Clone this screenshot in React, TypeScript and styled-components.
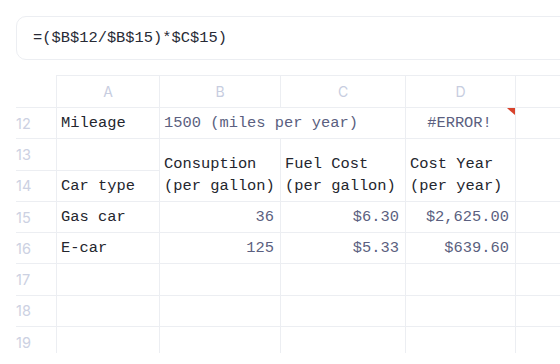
import { Fragment } from "react";
import { createGlobalStyle, styled } from "styled-components";

const GlobalStyle = createGlobalStyle`
    html, body {
        margin: 0;
        padding: 0;
        background: #ffffff;
        overflow: hidden;
    }
`;

const LINE = "#eceef2";
const MONO = "'Liberation Mono', 'DejaVu Sans Mono', monospace";
const SANS = "Inter, 'Noto Sans', sans-serif";

const StyledPage = styled.main`
    width: 560px;
    height: 364px;
    padding: 16px 0 0 16px;
    box-sizing: border-box;
    overflow: hidden;
`;

const FormulaBar = styled.div`
    width: 640px;
    height: 44px;
    box-sizing: border-box;
    display: flex;
    align-items: center;
    padding: 0 16px;
    border: 1px solid ${LINE};
    border-radius: 10px;
    font-family: ${MONO};
    font-size: 15.4px;
    color: #272a35;
    white-space: pre;
`;

const Sheet = styled.div`
    margin-top: 15px;
    width: 640px;
    height: 278px;
    overflow: hidden;
    display: grid;
    grid-template-columns: 41px 103px 121px 125px 110px 140px;
    grid-template-rows: 33px repeat(8, 31.3px);
`;

const Corner = styled.div`
    border-right: 1px solid ${LINE};
    border-bottom: 1px solid ${LINE};
`;

const ColHeader = styled.div`
    display: flex;
    align-items: center;
    justify-content: center;
    border-top: 1px solid ${LINE};
    border-right: 1px solid ${LINE};
    border-bottom: 1px solid ${LINE};
    font-family: ${SANS};
    font-size: 14px;
    color: #c7cde0;
`;

const RowHeader = styled.div`
    display: flex;
    align-items: center;
    border-right: 1px solid ${LINE};
    border-bottom: 1px solid ${LINE};
    font-family: ${SANS};
    font-size: 14.5px;
    color: #ccd1e2;
`;

type Align = "left" | "right" | "center";

const justify = { left: "flex-start", right: "flex-end", center: "center" };

const Cell = styled.div<{ $align?: Align; $value?: boolean; $rows?: number; $cols?: number; $bottom?: boolean }>`
    position: relative;
    display: flex;
    flex-direction: column;
    justify-content: ${(p) => (p.$bottom ? "flex-end" : "center")};
    align-items: ${(p) => justify[p.$align ?? "left"]};
    padding: ${(p) => (p.$bottom ? "0 6px 4px 4px" : "0 6px 0 4px")};
    grid-row: span ${(p) => p.$rows ?? 1};
    grid-column: span ${(p) => p.$cols ?? 1};
    border-right: 1px solid ${LINE};
    border-bottom: 1px solid ${LINE};
    font-family: ${MONO};
    font-size: 15.4px;
    line-height: 22px;
    white-space: pre;
    color: ${(p) => (p.$value ? "#5b5f80" : "#24262e")};
`;

const ErrorFlag = styled.span`
    position: absolute;
    top: 0;
    right: 0;
    width: 0;
    height: 0;
    border-top: 7px solid #d8432c;
    border-left: 8px solid transparent;
`;

const columns = ["A", "B", "C", "D", ""];

const rows = [
    { n: 15, name: "Gas car", use: "36", fuel: "$6.30", cost: "$2,625.00" },
    { n: 16, name: "E-car", use: "125", fuel: "$5.33", cost: "$639.60" },
];

const App = () => {
    return (
        <StyledPage>
            <GlobalStyle />
            <FormulaBar>=($B$12/$B$15)*$C$15)</FormulaBar>
            <Sheet>
                <Corner />
                {columns.map((c, i) => (
                    <ColHeader key={i}>{c}</ColHeader>
                ))}

                <RowHeader>12</RowHeader>
                <Cell>Mileage</Cell>
                <Cell $value $cols={2}>1500 (miles per year)</Cell>
                <Cell $value $align="center">
                    #ERROR!
                    <ErrorFlag />
                </Cell>
                <Cell />

                <RowHeader>13</RowHeader>
                <Cell />
                <Cell $rows={2} $bottom>
                    <span>Consuption</span>
                    <span>(per gallon)</span>
                </Cell>
                <Cell $rows={2} $bottom>
                    <span>Fuel Cost</span>
                    <span>(per gallon)</span>
                </Cell>
                <Cell $rows={2} $bottom>
                    <span>Cost Year</span>
                    <span>(per year)</span>
                </Cell>
                <Cell $rows={2} />
                <RowHeader>14</RowHeader>
                <Cell>Car type</Cell>

                {rows.map((r) => (
                    <Fragment key={r.n}>
                        <RowHeader>{r.n}</RowHeader>
                        <Cell>{r.name}</Cell>
                        <Cell $value $align="right">{r.use}</Cell>
                        <Cell $value $align="right">{r.fuel}</Cell>
                        <Cell $value $align="right">{r.cost}</Cell>
                        <Cell />
                    </Fragment>
                ))}

                {[17, 18, 19].map((n) => (
                    <Fragment key={n}>
                        <RowHeader>{n}</RowHeader>
                        <Cell />
                        <Cell />
                        <Cell />
                        <Cell />
                        <Cell />
                    </Fragment>
                ))}
            </Sheet>
        </StyledPage>
    );
};

export default App;
